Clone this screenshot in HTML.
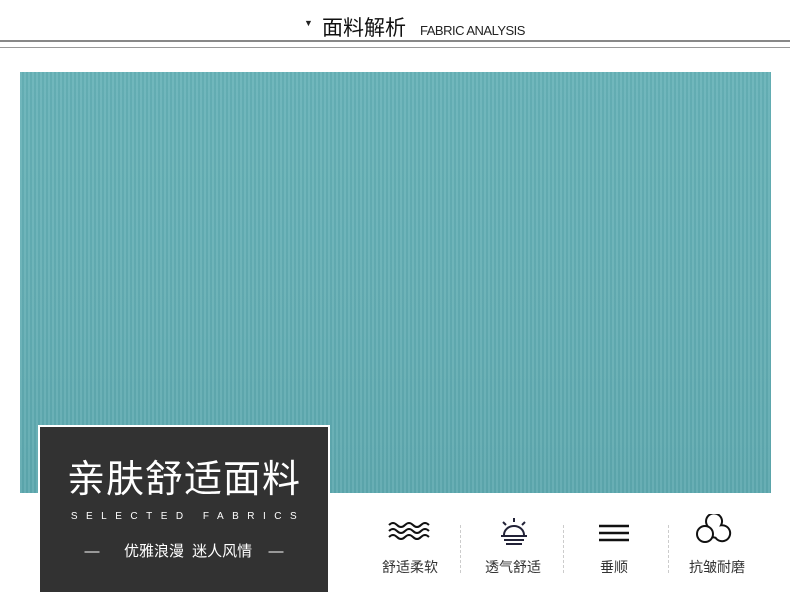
<!DOCTYPE html>
<html><head><meta charset="utf-8"><style>
body{margin:0;width:790px;height:616px;background:#fff;position:relative;overflow:hidden;font-family:"Liberation Sans","Noto Sans CJK SC",sans-serif}
.abs{position:absolute}
.fab{left:20px;top:72px;width:751px;height:421px;background:
repeating-linear-gradient(90deg,rgba(255,255,255,0.06) 0 2px,rgba(0,60,70,0.05) 2px 4px),
linear-gradient(180deg,#68b3b8,#64aeb4 60%,#5fa9af);}
.box{left:38px;top:425px;width:292px;height:169px;background:#fff}
.dark{left:40px;top:427px;width:288px;height:165px;background:#323232;color:#fff;text-align:center}
.lbl{font-size:14px;color:#333;width:100px;text-align:center;top:557px}
.div{top:525px;height:48px;border-left:1px dashed #ccc}
</style></head><body>
<div class="abs" style="left:304px;top:18px;font-size:9px;color:#222">▼</div>
<div class="abs" style="left:322px;top:12px;font-size:21px;color:#111">面料解析</div>
<div class="abs" style="left:420px;top:23px;font-size:13px;color:#222;letter-spacing:-0.5px">FABRIC ANALYSIS</div>
<div class="abs" style="left:0;top:40px;width:790px;height:2px;background:#888"></div>
<div class="abs" style="left:0;top:47px;width:790px;height:1px;background:#999"></div>
<div class="abs fab"></div>
<div class="abs box"></div>
<div class="abs dark">
<div style="margin-top:30px;font-size:38px;line-height:46px;letter-spacing:1px">亲肤舒适面料</div>
<div style="margin-top:8px;font-size:10px;letter-spacing:8.5px;padding-left:8px">SELECTED FABRICS</div>
<div style="margin-top:18px;font-size:15px;word-spacing:4px">—&nbsp;&nbsp; 优雅浪漫 迷人风情 &nbsp;—</div>
</div>
<svg class="abs" style="left:386px;top:520px" width="48" height="24" fill="none" stroke="#111" stroke-width="2">
<path d="M3 5q4-4 8 0t8 0t8 0t8 0t8 0"/><path d="M3 11q4-4 8 0t8 0t8 0t8 0t8 0"/><path d="M3 17q4-4 8 0t8 0t8 0t8 0t8 0"/></svg>
<svg class="abs" style="left:497px;top:516px" width="34" height="30" fill="none" stroke="#222237" stroke-width="2">
<path d="M17 2v4M6 6l3 3M28 6l-3 3"/><path d="M7 19a10 9 0 0 1 20 0" /><path d="M4 20h26M7 24h20M9 28h16"/></svg>
<svg class="abs" style="left:597px;top:522px" width="34" height="22" stroke="#111" stroke-width="2.5"><path d="M2 4h30M2 11h30M2 18h30"/></svg>
<svg class="abs" style="left:696px;top:514px" width="40" height="32" fill="none" stroke="#111" stroke-width="2">
<circle cx="9" cy="20" r="8"/><path d="M12 12.6A8 8 0 1 1 25 11.3A8 8 0 1 1 19.6 23.8L16 23"/></svg>
<div class="abs div" style="left:460px"></div>
<div class="abs div" style="left:563px"></div>
<div class="abs div" style="left:668px"></div>
<div class="abs lbl" style="left:360px">舒适柔软</div>
<div class="abs lbl" style="left:463px">透气舒适</div>
<div class="abs lbl" style="left:564px">垂顺</div>
<div class="abs lbl" style="left:667px">抗皱耐磨</div>
</body></html>
